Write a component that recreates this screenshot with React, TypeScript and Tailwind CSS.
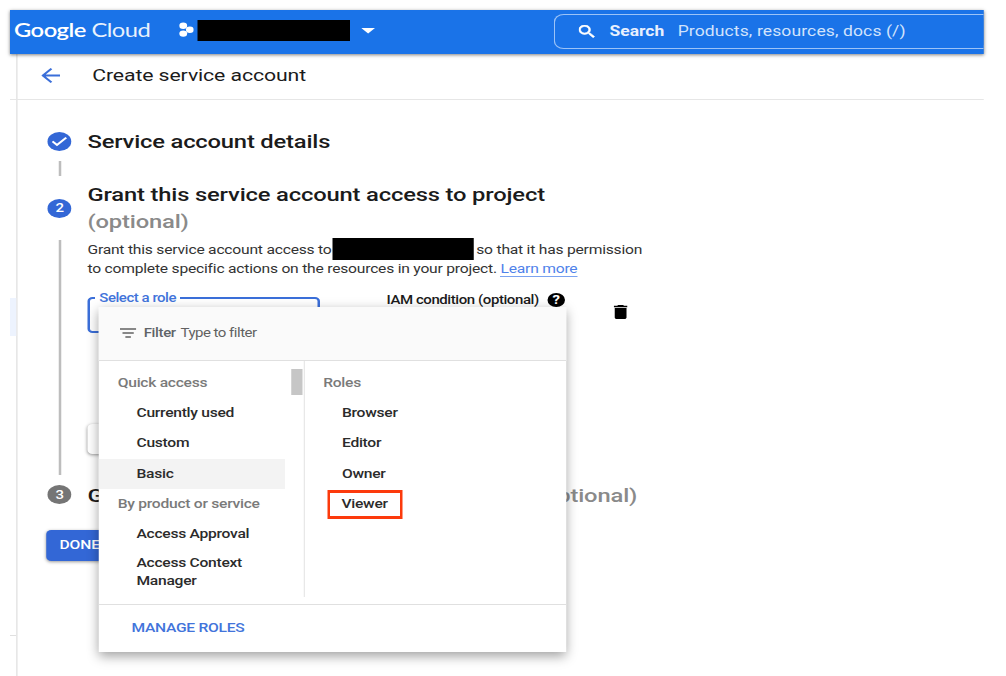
import React from "react";

const roboto = "font-['Roboto','Liberation_Sans',sans-serif]";

function Redacted({ className }: { className: string }) {
  return <span className={`block shrink-0 bg-black ${className}`} />;
}

function Header() {
  return (
    <header className="relative z-10 flex h-[43.5px] shrink-0 items-center bg-[#1a73e8] text-white shadow-[0_1px_3px_rgba(0,0,0,0.5)]">
      <div className="-mt-[4px] flex w-[133px] shrink-0 items-center pl-[3.6px] font-['Lato','Liberation_Sans',sans-serif] text-[19px] leading-[24px]">
        <span className="whitespace-nowrap tracking-[-0.42px]">
          <span className="font-semibold">Google</span> <span className="font-normal opacity-90">Cloud</span>
        </span>
      </div>
      <svg className="-mt-[4px] h-[15px] w-[14px] shrink-0" preserveAspectRatio="none" viewBox="0 0 13 15" fill="white">
        <ellipse cx="5.2" cy="3.8" rx="2.9" ry="3.2" />
        <ellipse cx="5.2" cy="11.6" rx="2.9" ry="3.2" />
        <ellipse cx="10.1" cy="7.8" rx="2.9" ry="3.2" />
      </svg>
      <Redacted className="-mt-[3px] ml-[3.6px] h-[20.5px] w-[122px]" />
      <svg className="-mt-[2px] ml-[8.4px] h-[6px] w-[11px] shrink-0" viewBox="0 0 11 6" fill="white">
        <path d="M0 0h11L5.5 5.5z" />
      </svg>
      <div className="-mt-[1px] ml-auto flex h-[35px] w-[344px] shrink-0 items-center rounded-l-[8px] border-[1.3px] border-r-0 border-[#9cc3f7] pl-[19px]">
        <svg className="h-[13px] w-[13px] shrink-0" viewBox="3 3 18 18" fill="white">
          <path stroke="white" strokeWidth=".8" d="M15.5 14h-.79l-.28-.27A6.471 6.471 0 0 0 16 9.5 6.5 6.5 0 1 0 9.5 16c1.61 0 3.09-.59 4.23-1.57l.27.28v.79l5 4.99L20.49 19l-4.99-5zm-6 0C7.01 14 5 11.99 5 9.5S7.01 5 9.5 5 14 7.01 14 9.5 11.99 14 9.5 14z" />
        </svg>
        <span className="ml-[11.5px] text-[14px] font-bold tracking-[-0.03px] text-[#e8f0fe]">Search</span>
        <span className="ml-[10.8px] whitespace-nowrap text-[14px] tracking-[0.1px] text-[#d2e3fc]">
          Products, resources, docs (/)
        </span>
      </div>
    </header>
  );
}

function StepDot({ tone, children }: { tone: string; children: React.ReactNode }) {
  return (
    <div className={`flex h-[19px] w-[19px] shrink-0 items-center justify-center rounded-full text-[12px] font-medium leading-none text-white ${tone}`}>
      {children}
    </div>
  );
}

function Rail() {
  return (
    <div className="flex w-[19px] shrink-0 flex-col items-center pt-[32.5px]">
      <StepDot tone="bg-[#3367d6]">
        <svg className="h-[11px] w-[13px]" viewBox="0 0 13 11" fill="none" stroke="white" strokeWidth="1.8">
          <path d="M1 5.3l3.6 3.6L12 1.6" />
        </svg>
      </StepDot>
      <div className="mt-[9.5px] h-[15px] w-[1.6px] shrink-0 bg-[#bdbdbd]" />
      <div className="h-[23px] shrink-0" />
      <StepDot tone="bg-[#3367d6]">2</StepDot>
      <div className="mt-[22.5px] h-[235px] w-[1.6px] shrink-0 bg-[#bdbdbd]" />
      <div className="h-[10px] shrink-0" />
      <StepDot tone="bg-[#757575]">3</StepDot>
    </div>
  );
}

const quickAccess = ["Currently used", "Custom", "Basic"];
const roles = ["Browser", "Editor", "Owner"];

function RoleMenu() {
  return (
    <div className="absolute left-[71.6px] top-[296.5px] z-20 flex h-[345px] w-[374px] flex-col bg-white text-[12.5px] text-[#2b2b2b] shadow-[0_4px_10px_rgba(0,0,0,0.38)]">
      <div className="flex h-[54px] shrink-0 items-center border-b border-[#e0e0e0] bg-[#fafafa] pl-[17px] text-[12px]">
        <svg className="h-[10px] w-[13px]" viewBox="0 0 13 10" fill="none" stroke="#616161" strokeWidth="1.7">
          <path d="M0 1h13M2 5h9M4.3 9h4.4" />
        </svg>
        <span className="ml-[5.8px] -mt-[1px] font-medium tracking-[-0.3px] text-[#5f6368]">Filter</span>
        <span className="ml-[3.8px] -mt-[1px] tracking-[-0.4px] text-[#616161]">Type to filter</span>
      </div>
      <div className="flex h-[243px] shrink-0">
        <div className="flex w-[149px] flex-col pt-[7.6px] font-medium tracking-[-0.22px]">
          <div className="flex h-[30.3px] items-center pl-[15px] text-[#7a7a7a]">Quick access</div>
          {quickAccess.map((name) => (
            <div
              key={name}
              className={`flex h-[30.3px] items-center pl-[30px] ${name === "Basic" ? "bg-[#f3f3f3]" : ""}`}
            >
              {name}
            </div>
          ))}
          <div className="flex h-[30.3px] items-center pl-[15px] text-[#7a7a7a]">By product or service</div>
          <div className="flex h-[29px] items-center pl-[30px]">Access Approval</div>
          <div className="pl-[30px] pt-[5px] leading-[18.3px]">
            Access Context
            <br />
            Manager
          </div>
        </div>
        <div className="mb-[7px] w-[15.4px] border-r border-[#e8e8e8] pl-[5px] pt-[8.5px]">
          <div className="h-[26px] w-[9px] bg-[#c6c6c6]" />
        </div>
        <div className="flex flex-col items-start pl-[15px] pt-[7.6px] font-medium tracking-[-0.22px]">
          <div className="flex h-[30.3px] items-center text-[#7a7a7a]">Roles</div>
          {roles.map((name) => (
            <div key={name} className="flex h-[30.3px] items-center pl-[15px]">{name}</div>
          ))}
          <div className="ml-[3.6px] mt-[0.4px] flex h-[29px] w-[59.6px] items-center border-x-[2.4px] border-y-[3px] border-[#fc3a0c] pl-[9px]">
            Viewer
          </div>
        </div>
      </div>
      <div className="flex flex-1 items-center border-t border-[#e0e0e0] pl-[26px] font-medium tracking-[-0.23px] text-[#4274db]">
        MANAGE ROLES
      </div>
    </div>
  );
}

function Steps() {
  return (
    <div className="ml-[12.6px] flex w-[460px] flex-col pt-[30px]">
      <h2 className="shrink-0 whitespace-nowrap text-[19px] font-medium leading-[24px] tracking-[-0.15px]">Service account details</h2>
      <h2 className="mt-[27px] shrink-0 whitespace-nowrap text-[19px] font-medium leading-[27px] tracking-[-0.13px]">
        Grant this service account access to project
        <br />
        <span className="text-[#8a8a8a]">(optional)</span>
      </h2>
      <div className="mt-[5px] shrink-0 whitespace-nowrap text-[12.5px] leading-[19.5px] tracking-[-0.17px] text-[#333]">
        <div className="flex h-[19.5px] items-center">
          <span>Grant this service account access to</span>
          <Redacted className="ml-[1px] h-[22px] w-[113px]" />
          <span className="ml-[1.8px]">so that it has permission</span>
        </div>
        <div>
          to complete specific actions on the resources in your project.{" "}
          <span className="border-b border-[#7ba3f0] text-[#4f82ea]">Learn more</span>
        </div>
      </div>
      <div className="mt-[12px] flex h-[43px] shrink-0 items-start">
        <fieldset className="h-[42.5px] w-[186px] rounded-[4px] border-2 border-[#3b6fd9] pl-[4px]">
          <legend className="h-[15px] px-[3.5px] text-[12px] font-medium leading-[15px] tracking-[-0.38px] text-[#4274db]">Select a role</legend>
        </fieldset>
        <span className="ml-[53.2px] whitespace-nowrap text-[12px] font-medium leading-[19px] tracking-[-0.34px]">IAM condition (optional)</span>
        <div className="ml-[7.2px] mt-[2px] flex h-[14px] w-[13.4px] items-center justify-center rounded-full bg-black text-[12px] font-bold leading-none text-white">?</div>
        <svg className="ml-[39.2px] mt-[14px] h-[14px] w-[11px]" viewBox="5 3 14 18" preserveAspectRatio="none">
          <path d="M6 19c0 1.1.9 2 2 2h8c1.1 0 2-.9 2-2V7H6v12zM19 4h-3.5l-1-1h-5l-1 1H5v2h14V4z" />
        </svg>
      </div>
      <div className="mt-[90px] h-[30px] w-[120px] shrink-0 rounded-[4px] bg-white shadow-[0_1px_3px_rgba(0,0,0,0.4)]" />
      <h2 className="mt-[30px] flex w-[439.8px] shrink-0 justify-between whitespace-nowrap text-[19px] font-medium leading-[24px] tracking-[-0.12px]">
        <span>G</span>
        <span className="text-[#8a8a8a]">(optional)</span>
      </h2>
    </div>
  );
}

export default function App() {
  return (
    <div className="h-[676px] w-[1006px] overflow-hidden bg-white">
      <div className={`flex h-[676px] w-[804.8px] origin-top-left scale-x-125 pl-[7.6px] pt-[10px] text-[#1b1b1b] ${roboto}`}>
        <div className="relative flex h-[666px] w-[779.6px] flex-col">
          <Header />
          <div className="flex h-[46px] shrink-0 border-b border-[#e6e6e6]">
            <div className="w-[6.2px] border-r border-[#e0e0e0]" />
            <div className="flex items-center pl-[19.5px] pb-[2px]">
              <svg className="h-[15px] w-[15px]" viewBox="4 4 16 16" fill="#3b6fd9">
                <path d="M20 11H7.83l5.59-5.59L12 4l-8 8 8 8 1.41-1.41L7.83 13H20v-2z" />
              </svg>
              <h1 className="ml-[25.5px] pt-[1px] text-[17px] font-normal tracking-[-0.09px]">Create service account</h1>
            </div>
          </div>
          <div className="flex flex-1">
            <div className="flex w-[6.2px] shrink-0 flex-col border-r border-[#e0e0e0]">
              <div className="mt-[198px] h-[38px] bg-[#edf3fe]" />
              <div className="mt-[299px] h-px bg-[#e0e0e0]" />
            </div>
            <div className="relative flex flex-1 flex-col">
              <div className="flex h-[408px] shrink-0 pl-[24.6px]">
                <Rail />
                <Steps />
              </div>
              <button className="ml-[23px] mt-[22px] flex h-[31px] w-[80px] items-center rounded-[4px] bg-[#3367d6] pl-[10.8px] text-[12.5px] font-medium tracking-[-0.1px] text-white shadow-[0_1px_3px_rgba(0,0,0,0.4)]">
                DONE
              </button>
            </div>
          </div>
          <RoleMenu />
        </div>
      </div>
    </div>
  );
}
